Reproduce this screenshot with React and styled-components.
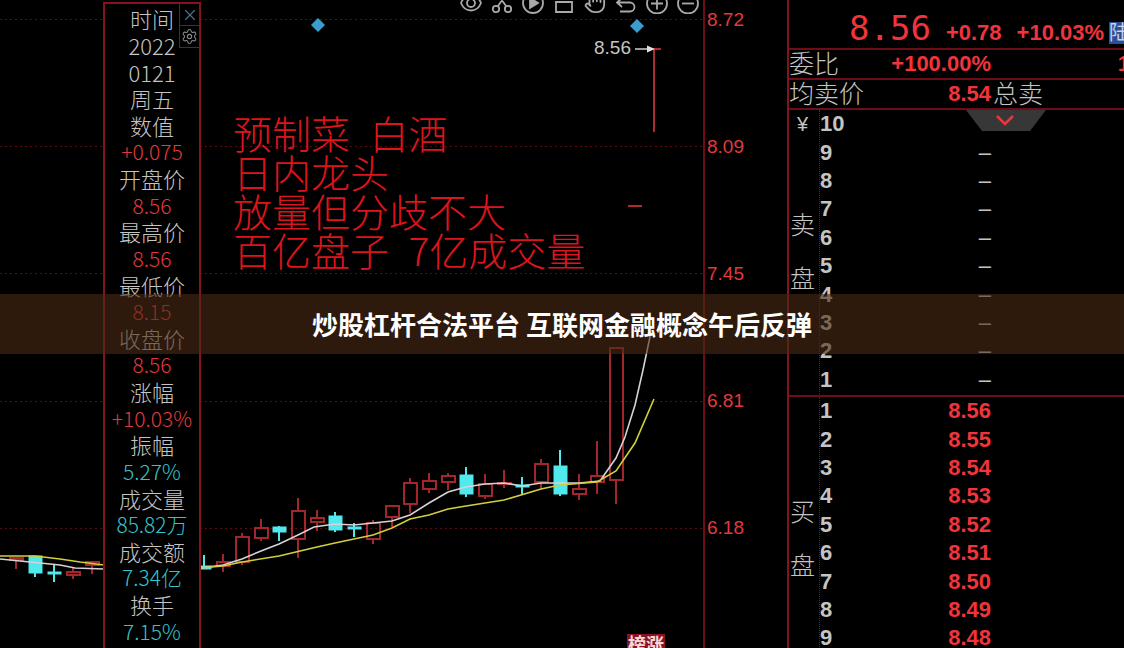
import React from "react";
import styled, { createGlobalStyle } from "styled-components";
import { Hand, Settings, X } from "lucide-react";

const stats = [
  { text: "时间" },
  { text: "2022" },
  { text: "0121" },
  { text: "周五" },
  { text: "数值" },
  { text: "+0.075", tone: "up" },
  { text: "开盘价" },
  { text: "8.56", tone: "up" },
  { text: "最高价" },
  { text: "8.56", tone: "up" },
  { text: "最低价" },
  { text: "8.15", tone: "up" },
  { text: "收盘价" },
  { text: "8.56", tone: "up" },
  { text: "涨幅" },
  { text: "+10.03%", tone: "up" },
  { text: "振幅" },
  { text: "5.27%", tone: "info" },
  { text: "成交量" },
  { text: "85.82万", tone: "info" },
  { text: "成交额" },
  { text: "7.34亿", tone: "info" },
  { text: "换手" },
  { text: "7.15%", tone: "info" },
];

// en spaces keep the half-width rhythm of the note
const notes = [
  "预制菜\u2002白酒",
  "日内龙头",
  "放量但分歧不大",
  "百亿盘子\u20027亿成交量",
];

const axis = ["8.72", "8.09", "7.45", "6.81", "6.18"];
const gridLines = [19, 146, 273, 401, 528];

const sells = [10, 9, 8, 7, 6, 5, 4, 3, 2, 1].map((rank) => ({
  rank,
  price: rank === 10 ? "" : "–",
}));

const buys = [
  "8.56",
  "8.55",
  "8.54",
  "8.53",
  "8.52",
  "8.51",
  "8.50",
  "8.49",
  "8.48",
  "8.47",
].map((price, i) => ({ rank: i + 1, price }));

// x, body top, body bottom, wick top, wick bottom, falling
const candles = [
  [16, 558, 560, 557, 569, false],
  [35, 556, 573, 556, 577, true],
  [54, 572, 574, 565, 582, true],
  [73, 572, 575, 568, 579, false],
  [92, 562, 565, 561, 574, false],
  [204, 566, 569, 555, 569, true],
  [223, 562, 566, 554, 572, false],
  [242, 537, 562, 533, 565, false],
  [261, 528, 538, 519, 541, false],
  [279, 527, 532, 526, 541, true],
  [298, 511, 539, 498, 558, false],
  [317, 518, 522, 510, 531, false],
  [335, 516, 530, 512, 532, true],
  [354, 527, 529, 523, 537, true],
  [373, 523, 539, 520, 544, false],
  [392, 506, 517, 506, 527, false],
  [410, 483, 504, 478, 513, false],
  [429, 481, 489, 473, 493, false],
  [448, 476, 482, 473, 490, false],
  [466, 475, 494, 467, 497, true],
  [485, 484, 496, 474, 499, false],
  [504, 483, 484, 470, 488, false],
  [522, 485, 487, 477, 494, true],
  [541, 464, 482, 459, 488, false],
  [560, 466, 494, 450, 496, true],
  [579, 489, 494, 474, 500, false],
  [597, 476, 482, 441, 494, false],
  [616, 348, 480, 348, 504, false],
];

const Candle = ({ data }) => {
  const [x, top, bottom, high, low, falling] = data;
  const color = falling ? "#4fe9ee" : "#a3262c";

  return (
    <g stroke={color} strokeWidth="2">
      <path d={`M${x} ${high}V${top}M${x} ${bottom}V${low}`} />
      <rect
        x={x - 6}
        y={top}
        width="13"
        height={bottom - top}
        fill={falling ? color : "none"}
        strokeWidth={falling ? 1 : 2}
      />
    </g>
  );
};

const CandleChart = () => (
  <ChartSvg viewBox="0 0 703 648" role="img" aria-label="K线图">
    {gridLines.map((y) => (
      <path
        key={y}
        d={`M0 ${y}.5H703`}
        stroke="#5a0c10"
        strokeDasharray="2 3"
      />
    ))}
    {candles.map((data) => (
      <Candle key={data[0]} data={data} />
    ))}
    <g fill="none" stroke="#d8d2d6" strokeWidth="1.6">
      <path d="M0 559L30 562L60 565L75 568L104 569" />
      <path d="M200 568L223 565L242 559L261 551L279 544L298 535L314 527L335 524L354 525L392 521L410 515L429 503L448 492L466 487L485 484L504 483L522 486L541 483L579 483L600 481L616 458L625 437L635 405L643 370L651 332" />
    </g>
    <g fill="none" stroke="#d2cf3c" strokeWidth="1.6">
      <path d="M0 556H35L60 559L80 562L104 565" />
      <path d="M200 568L223 566L242 562L279 556L317 547L335 543L373 535L392 528L410 519L429 515L448 509L466 506L504 500L541 489L560 485L597 482L616 471L635 443L654 399" />
    </g>
    <path d="M654 49V132M650 49H661M628 206H642" stroke="#b02a32" strokeWidth="2" />
    <path d="M635 49H648" stroke="#cfcfcf" strokeWidth="1.5" />
    <path d="M647 45.500L655 49L647 52.500Z" fill="#e0e0e0" />
    <path d="M318 18L325 25L318 32L311 25Z" fill="#3a9dcd" />
    <path d="M637 19L644 26L637 33L630 26Z" fill="#3a9dcd" />
  </ChartSvg>
);

const Glyph = ({ children }) => (
  <svg
    width="22"
    height="22"
    viewBox="0 0 22 22"
    fill="none"
    stroke="currentColor"
    strokeWidth="1.8"
  >
    {children}
  </svg>
);

const tools = [
  {
    name: "显示",
    icon: (
      <Glyph>
        <path d="M1 11C5 1 17 1 21 11C17 21 5 21 1 11Z" />
        <circle cx="11" cy="11" r="4" />
      </Glyph>
    ),
  },
  {
    name: "剪切",
    icon: (
      <Glyph>
        <circle cx="5" cy="17" r="3.200" />
        <circle cx="17" cy="17" r="3.200" />
        <path d="M7 14L16 1M15 14L6 1" />
      </Glyph>
    ),
  },
  {
    name: "播放",
    icon: (
      <Glyph>
        <circle cx="11" cy="11" r="10" />
        <path d="M8 6L16 11L8 16Z" fill="currentColor" />
      </Glyph>
    ),
  },
  {
    name: "锁定",
    icon: (
      <Glyph>
        <path d="M3 10H19V20H3Z" />
      </Glyph>
    ),
  },
  { name: "拖动", icon: <Hand size={22} /> },
  {
    name: "撤销",
    icon: (
      <Glyph>
        <path d="M7 6L2 10.500L7 15M2 10.500H15a4.500 4.500 0 0 1 0 9H5" />
      </Glyph>
    ),
  },
  {
    name: "放大",
    icon: (
      <Glyph>
        <circle cx="11" cy="11.500" r="10" />
        <path d="M5 11.500H17M11 5.500V17.500" />
      </Glyph>
    ),
  },
  {
    name: "缩小",
    icon: (
      <Glyph>
        <circle cx="11" cy="11.500" r="10" />
        <path d="M5 11.500H17" />
      </Glyph>
    ),
  },
];

const StatPanel = () => (
  <Panel>
    <PanelButtons>
      <PanelButton aria-label="关闭" $color="#4d7386">
        <X size={18} strokeWidth={1.5} />
      </PanelButton>
      <PanelButton aria-label="设置" $color="#85888c">
        <Settings size={17} strokeWidth={1.5} />
      </PanelButton>
    </PanelButtons>
    <StatList>
      {stats.map((item, i) => (
        <Stat key={i} $tone={item.tone}>
          {item.text}
        </Stat>
      ))}
    </StatList>
  </Panel>
);

const Book = ({ title, unit, rows, tone }) => (
  <BookSection>
    <Side>
      <Unit>{unit}</Unit>
      <SideTitle>
        {title.split("").map((char) => (
          <span key={char}>{char}</span>
        ))}
      </SideTitle>
    </Side>
    <BookTable aria-label={title}>
      <tbody>
        {rows.map((row) => (
          <tr key={row.rank}>
            <Rank scope="row">{row.rank}</Rank>
            <Price $tone={tone}>{row.price}</Price>
            <td />
          </tr>
        ))}
      </tbody>
    </BookTable>
  </BookSection>
);

const App = () => (
  <Screen>
    <GlobalStyle />
    <Chart>
      <CandleChart />
      <Toolbar>
        {tools.map((tool) => (
          <ToolButton key={tool.name} aria-label={tool.name}>
            {tool.icon}
          </ToolButton>
        ))}
      </Toolbar>
      <PeakLabel>8.56</PeakLabel>
      <Notes>
        {notes.map((line) => (
          <p key={line}>{line}</p>
        ))}
      </Notes>
      <StatPanel />
      <Tag>榜涨</Tag>
    </Chart>
    <Axis>
      {axis.map((value) => (
        <span key={value}>{value}</span>
      ))}
    </Axis>
    <Quote>
      <PriceRow>
        <LastPrice>8.56</LastPrice>
        <Figure>+0.78</Figure>
        <Change>
          <Figure>+10.03%</Figure>
          <Market>陆</Market>
        </Change>
      </PriceRow>
      <FactRow>
        <Fact>
          委比<Figure>+100.00%</Figure>
        </Fact>
        <Cut>1</Cut>
      </FactRow>
      <FactRow>
        <Fact>
          均卖价<Figure>8.54</Figure>
        </Fact>
        <span>总卖</span>
      </FactRow>
      <Books>
        <Drawer aria-label="展开">
          <svg width="80" height="21" viewBox="0 0 80 21" fill="none">
            <path d="M0 0H80L64 21H16Z" fill="#373737" />
            <path d="M31 6L39 14L47 6" stroke="#f0343c" strokeWidth="2.500" />
          </svg>
        </Drawer>
        <Book title="卖盘" unit="¥" rows={sells} />
        <Book title="买盘" rows={buys} tone="up" />
      </Books>
    </Quote>
    <Banner>
      <h1>炒股杠杆合法平台 互联网金融概念午后反弹</h1>
    </Banner>
  </Screen>
);

const tones = {
  up: "#e03a3e",
  info: "#35c3cf",
};

const GlobalStyle = createGlobalStyle`
  * {
    box-sizing: border-box;
  }
  body {
    margin: 0;
    background: #000;
    font-family: "Liberation Sans", "Noto Sans CJK SC", sans-serif;
  }
  p,
  h1,
  ul {
    margin: 0;
    padding: 0;
  }
  button {
    display: flex;
    align-items: center;
    justify-content: center;
    padding: 0;
    background: none;
    border: none;
    cursor: pointer;
  }
`;

const Screen = styled.main`
  position: relative;
  display: grid;
  grid-template-columns: minmax(0, 1fr) 84px 337px;
  height: 100vh;
  overflow: hidden;
  color: #c4c4c4;
  background: #000;
`;

const Chart = styled.section`
  position: relative;
  overflow: hidden;
`;

const ChartSvg = styled.svg`
  display: block;
  width: 100%;
`;

const Toolbar = styled.div`
  position: absolute;
  top: -8px;
  right: 4px;
  display: flex;
  gap: 9px;
`;

const ToolButton = styled.button`
  width: 22px;
  height: 22px;
  color: #a9a9a9;
`;

const PeakLabel = styled.span`
  position: absolute;
  top: 38px;
  right: 72px;
  font-size: 19px;
  line-height: 20px;
`;

const Notes = styled.div`
  position: absolute;
  top: 113px;
  left: 233px;
  color: #dc141c;
  font-weight: 300;
  font-size: 39px;
  font-family: "Noto Sans CJK SC", sans-serif;
  line-height: 39px;
  white-space: nowrap;
`;

const Panel = styled.aside`
  position: absolute;
  top: 2px;
  bottom: 0;
  left: 103px;
  width: 98px;
  padding: 1px 0 4px;
  background: #000;
  border: 2px solid #86121d;
  border-bottom: none;
`;

const PanelButtons = styled.div`
  position: absolute;
  top: 0;
  right: 0;
`;

const PanelButton = styled.button`
  width: 20px;
  height: 22px;
  color: ${({ $color }) => $color};
  border: 1px solid #86121d;
  border-top: none;
  border-right: none;
`;

const StatList = styled.ul`
  display: grid;
  grid-template-rows: repeat(24, 1fr);
  height: 100%;
  font-weight: 300;
  font-family: "Noto Sans CJK SC", sans-serif;
  list-style: none;
`;

const Stat = styled.li`
  display: flex;
  align-items: center;
  justify-content: center;
  color: ${({ $tone }) => tones[$tone] || "#c4c4c4"};
  font-size: ${({ $tone }) => ($tone ? "21px" : "22px")};
  line-height: 26px;
  white-space: nowrap;
`;

const Tag = styled.span`
  position: absolute;
  bottom: -9px;
  left: 627px;
  padding: 0 1px;
  color: #f3d9dc;
  font-weight: 700;
  font-size: 18px;
  line-height: 23px;
  background: #8c1220;
`;

const Axis = styled.div`
  display: flex;
  flex-direction: column;
  gap: 107px;
  padding: 10px 0 0 2px;
  color: ${tones.up};
  font-size: 19px;
  line-height: 20px;
  border-left: 2px solid #6e0c18;
`;

const Quote = styled.section`
  overflow: hidden;
  border-left: 2px solid #86121d;
`;

const Figure = styled.span`
  color: #f0343c;
  font-weight: 700;
  font-size: 22px;
`;

const PriceRow = styled.div`
  display: flex;
  gap: 15px;
  align-items: baseline;
  height: 50px;
  padding: 8px 0 0 60px;
  white-space: nowrap;
  border-bottom: 2px solid #6e0c18;
`;

const LastPrice = styled.strong`
  color: #f0343c;
  font-weight: 400;
  font-size: 34px;
  font-family: "DejaVu Sans Mono", monospace;
  line-height: 40px;
`;

const Change = styled.span`
  display: flex;
  gap: 5px;
  align-items: baseline;
`;

const Market = styled.span`
  color: #c3d2ee;
  font-size: 20px;
  line-height: 22px;
  background: #2b4f96;
`;

const FactRow = styled.div`
  display: flex;
  gap: 2px;
  align-items: center;
  height: 30px;
  overflow: hidden;
  font-weight: 300;
  font-size: 25px;
  line-height: 28px;
  white-space: nowrap;
  border-bottom: 2px solid #6e0c18;
`;

const Fact = styled.div`
  display: flex;
  flex-shrink: 0;
  align-items: center;
  justify-content: space-between;
  width: 202px;
`;

const Cut = styled(Figure)`
  margin-right: -6px;
  margin-left: auto;
`;

const Books = styled.div`
  position: relative;
`;

const Drawer = styled.button`
  position: absolute;
  top: 0;
  left: 177px;
`;

const BookSection = styled.div`
  display: grid;
  grid-template-columns: 31px 1fr;
  padding-bottom: 1px;
  border-bottom: 2px solid #6e0c18;
`;

const Side = styled.div`
  display: grid;
  grid-template-rows: 28px 1fr 28px;
  justify-items: center;
  padding-right: 3px;
  font-weight: 300;
  font-size: 25px;
  border-right: 1px dotted #86121d;
`;

const Unit = styled.span`
  font-size: 20px;
  line-height: 28px;
`;

const SideTitle = styled.div`
  display: flex;
  flex-direction: column;
  justify-content: center;
  line-height: 54px;
`;

const BookTable = styled.table`
  width: 100%;
  height: 284px;
  font-weight: 700;
  font-size: 22px;
  line-height: 26px;
  table-layout: fixed;
  border-collapse: collapse;

  td,
  th {
    padding: 0;
  }
`;

const Rank = styled.th`
  width: 70px;
  text-align: left;
`;

const Price = styled.td`
  width: 101px;
  color: ${({ $tone }) => ($tone ? "#f0343c" : "#c4c4c4")};
  font-weight: ${({ $tone }) => ($tone ? 700 : 400)};
  text-align: right;
`;

const Banner = styled.header`
  position: absolute;
  top: 50%;
  right: 0;
  left: 0;
  display: flex;
  align-items: center;
  justify-content: center;
  height: 60px;
  background: rgb(75 43 22 / 60%);
  transform: translateY(-50%);

  h1 {
    color: #fff;
    font-weight: 700;
    font-size: 26px;
    font-family: "Noto Sans CJK SC", sans-serif;
    line-height: 38px;
  }
`;

export default App;
